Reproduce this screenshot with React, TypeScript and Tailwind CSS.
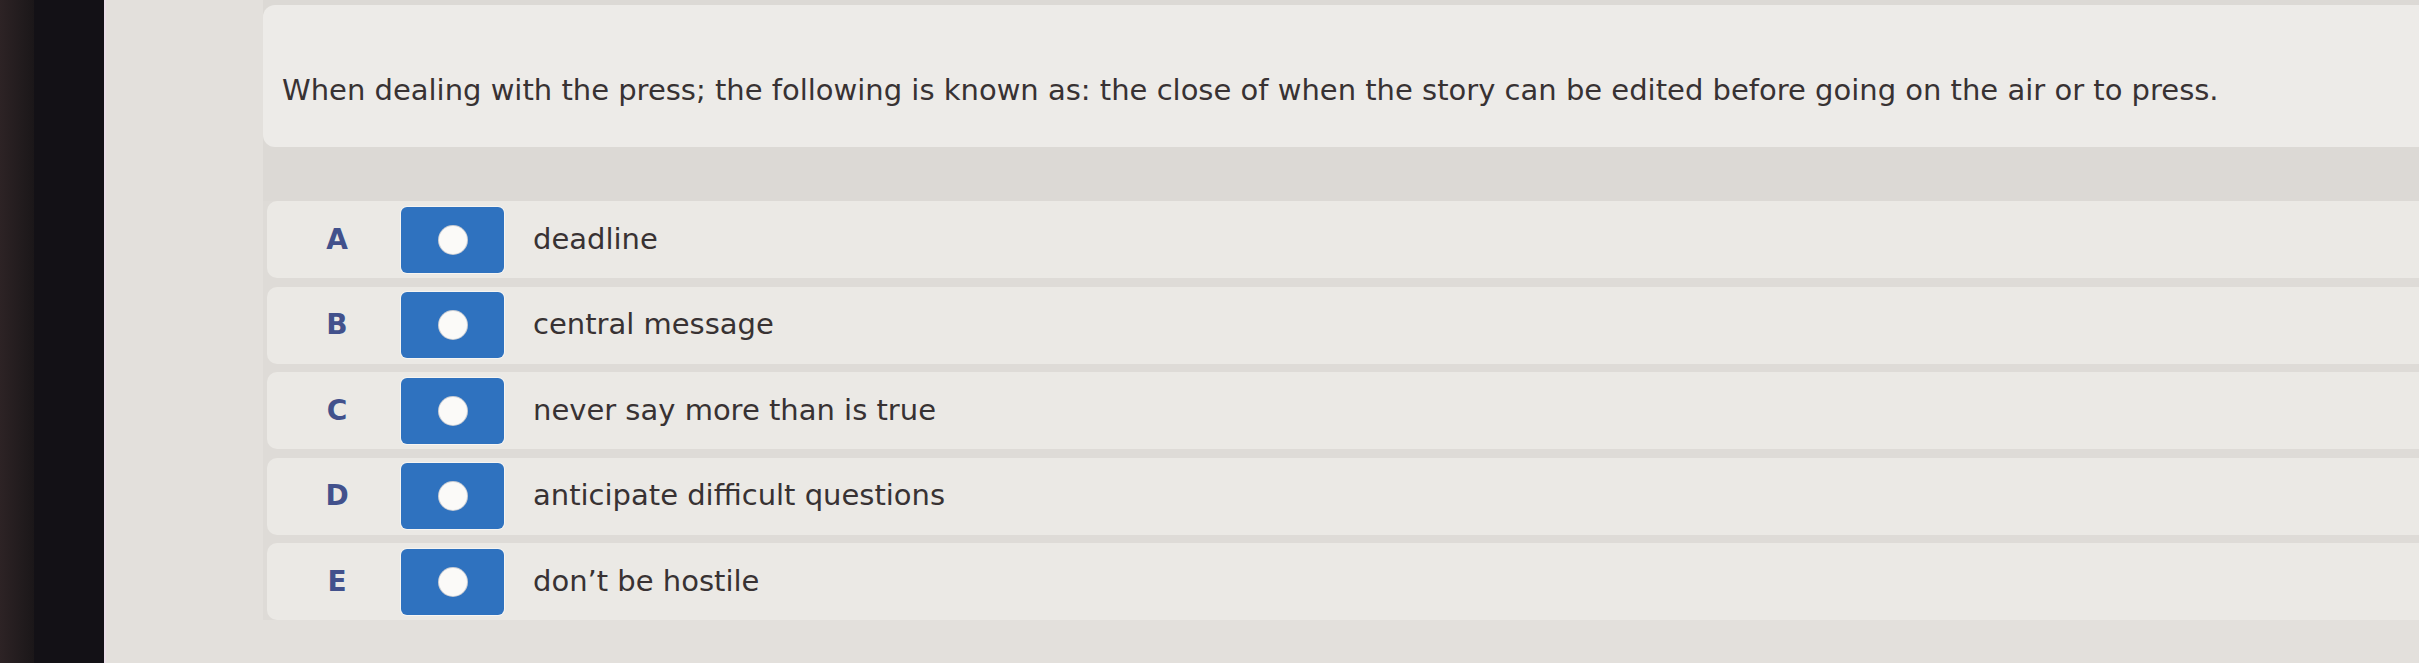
import React from "react";

interface Choice {
  letter: string;
  text: string;
}

const choices: Choice[] = [
  { letter: "A", text: "deadline" },
  { letter: "B", text: "central message" },
  { letter: "C", text: "never say more than is true" },
  { letter: "D", text: "anticipate difficult questions" },
  { letter: "E", text: "don\u2019t be hostile" },
];

const question =
  "When dealing with the press; the following is known as: the close of when the story can be edited before going on the air or to press.";

const RadioButton: React.FC = () => (
  <div className="flex h-[66px] w-[103px] shrink-0 items-center justify-center rounded-[6px] bg-[#2f72bf] shadow-[0_0_0_1px_rgba(255,255,255,0.5)]">
    <span className="block h-[28px] w-[28px] rounded-full bg-[#fbfaf8] shadow-[0_0_0_1px_#c9cdd4]" />
  </div>
);

const ChoiceRow: React.FC<{ choice: Choice }> = ({ choice }) => (
  <div className="flex h-[77px] items-center rounded-l-[10px] bg-[#ebe9e5]">
    <span className="ml-[58px] w-[24px] text-center text-[28px] font-bold text-[#42518c]">
      {choice.letter}
    </span>
    <div className="ml-[52px]">
      <RadioButton />
    </div>
    <span className="ml-[29px] text-[29px] text-[#383233]">{choice.text}</span>
  </div>
);

export default function App() {
  return (
    <div
      className="flex h-[663px] w-full overflow-hidden bg-[#e3e0dc]"
      style={{ fontFamily: '"DejaVu Sans", Verdana, sans-serif' }}
    >
      {/* monitor bezel */}
      <div className="flex h-full w-[106px] shrink-0">
        <div className="h-full w-[34px] bg-gradient-to-r from-[#2d2325] to-[#1b1719]" />
        <div className="h-full flex-1 bg-[#131116]" />
        <div className="h-full w-[2px] bg-[#e8dde6]" />
      </div>

      <div className="w-[157px] shrink-0" />

      <div className="flex min-w-0 flex-1 flex-col">
        <div className="flex flex-col bg-[#dcd9d5] pt-[5px]">
          <div className="flex h-[142px] items-start rounded-l-[12px] bg-[#edebe8] pl-[19px] pt-[68px]">
            <p className="whitespace-nowrap text-[29px] leading-[34px] text-[#383233]">
              {question}
            </p>
          </div>
          <div className="h-[54px]" />
        </div>

        <div className="flex flex-col gap-[8.5px] bg-[#dedbd7] pl-[4px]">
          {choices.map((c) => (
            <ChoiceRow key={c.letter} choice={c} />
          ))}
        </div>
      </div>
    </div>
  );
}
